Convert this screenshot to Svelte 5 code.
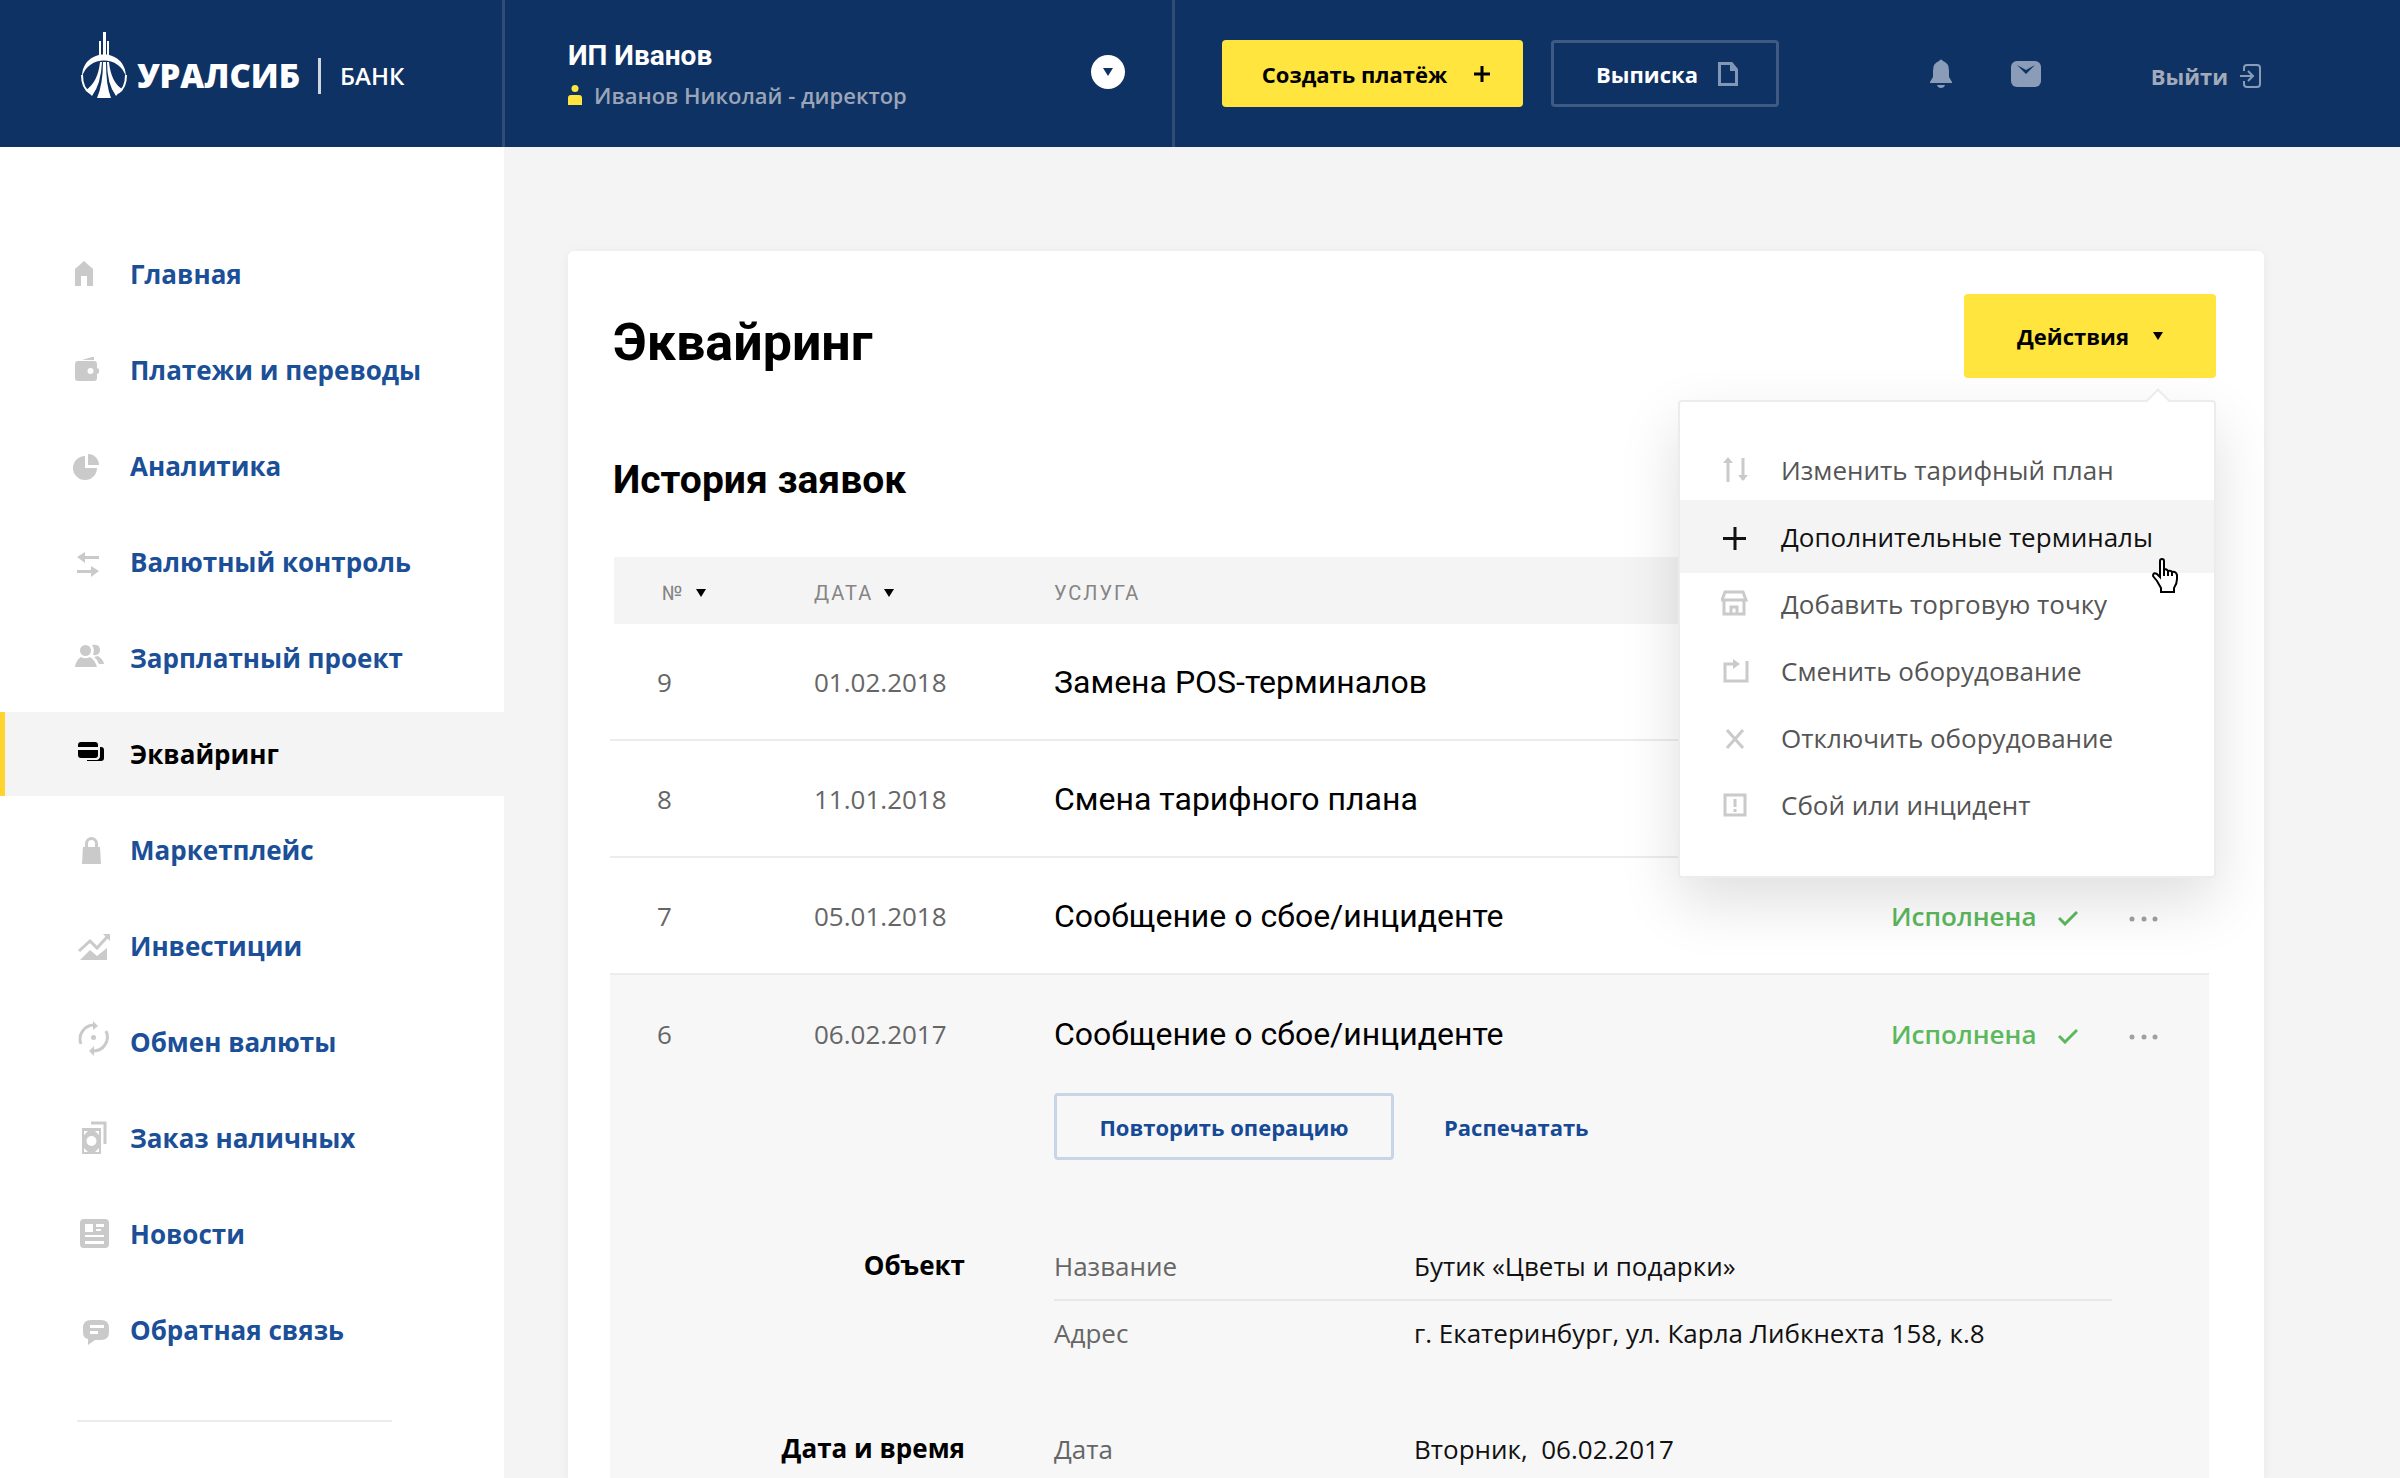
<script>
  const menu = [
    { title: 'Главная', icon: '<path d="M12 7l9 8v17h-6V22H9v10H3V15z"/>' },
    {
      title: 'Платежи и переводы',
      icon: '<path fill-rule="evenodd" d="M6 11h16q3 0 3 3v4l2 1v4l-2 1v4q0 3-3 3H6q-3 0-3-3V14q0-3 3-3zM18.500 18a3 3 0 1 0 0 6 3 3 0 0 0 0-6z"/><path d="M10 10l10-3h2v3z"/>'
    },
    {
      title: 'Аналитика',
      icon: '<path d="M13 10v12h12a12 12 0 1 1-12-12z"/><path d="M16 8a11 11 0 0 1 11 11H16z"/>'
    },
    {
      title: 'Валютный контроль',
      icon: '<path d="M5 15l8-5v4h14v3H13v4z"/><path d="M27 29l-8-5v4H5v3h14v4z"/>'
    },
    {
      title: 'Зарплатный проект',
      icon: '<circle cx="13.500" cy="12.500" r="5.500"/><path d="M3 29q1-7 6-10 4.500 2.500 9 0 5 3 7 10z"/><path d="M20 7q8-1 8 5t-7 5q2-5-1-10zM22 19l4-1q5 3 6 8h-5q-2-5-5-7z"/>'
    },
    {
      title: 'Эквайринг',
      active: true,
      icon: '<path d="M9 8h14q3 0 3 3v2H6v-2q0-3 3-3zM6 16h20v5q0 3-3 3H9q-3 0-3-3z"/><path d="M28 13h1q3 0 3 3v8q0 3-3 3H15v-1h10q3-1 3-4z"/>'
    },
    {
      title: 'Маркетплейс',
      icon: '<path d="M11 17h17l1 17H10z"/><path d="M14.500 18v-4.500a5 5 0 0 1 10 0V18" fill="none" stroke="currentColor" stroke-width="3"/>'
    },
    {
      title: 'Инвестиции',
      icon: '<path d="M7 25l11-10 7 7 10-11" fill="none" stroke="currentColor" stroke-width="3"/><path d="M31 8h7v7zM8 34l10-10 7 6 10-8v12z"/>'
    },
    {
      title: 'Обмен валюты',
      icon: '<path d="M9 22A14 14 0 0 1 22 3M34 9A14 14 0 0 1 21 29" fill="none" stroke="currentColor" stroke-width="3"/><path d="M21-1l5 5-5 4zM22 24l-5 5 5 5z"/><circle cx="21.500" cy="15.500" r="2.500"/>'
    },
    {
      title: 'Заказ наличных',
      icon: '<path d="M10 10h19v26H10z"/><path d="M19 5h14v21" fill="none" stroke="currentColor" stroke-width="3"/><circle cx="19.500" cy="23" r="5" fill="#fff"/><path fill="#fff" d="M12 13h4l-4 4zM27 13h-4l4 4zM12 34h4l-4-4zM27 34h-4l4-4z"/>'
    },
    {
      title: 'Новости',
      icon: '<rect x="8" y="5" width="29" height="29" rx="4"/><path fill="#fff" d="M13 10h8v8h-8zM24 10h8v3h-8zM24 15h5v2h-5zM13 21h19v2H13zM13 27h19v3H13z"/>'
    },
    {
      title: 'Обратная связь',
      icon: '<path d="M19 10h10q8 0 8 8v4q0 8-8 8h-6l-7 5v-6q-5-1-5-7v-4q0-8 8-8z"/><path fill="#fff" d="M18 15h14v3H18zM18 21h8v3h-8z"/>'
    }
  ];

  const actions = [
    { title: 'Изменить тарифный план', icon: '<path d="M7 27V5M22 3v22" stroke-width="3"/><path d="M2 8l5-6 5 6zM17 20l5 6 5-6z" fill="currentColor" stroke="none"/>' },
    { title: 'Дополнительные терминалы', hover: true, icon: '<path d="M14 5v23M2 16.500h23" stroke-width="3"/>' },
    { title: 'Добавить торговую точку', icon: '<path d="M4 3h18l3 8H1zM3 11v14h20V11M10 25v-7h6v7" stroke-width="3"/>' },
    { title: 'Сменить оборудование', icon: '<path d="M14 8H4v17h22V5" stroke-width="3"/><path d="M12 3l7 5-7 5z" fill="currentColor" stroke="none"/>' },
    { title: 'Отключить оборудование', icon: '<path d="M6 7l16 18M22 7L6 25" stroke-width="3"/>' },
    { title: 'Сбой или инцидент', icon: '<path d="M4 5h20v20H4zM14 9v8M14 19v3" stroke-width="3"/>' }
  ];

  const requests = [
    { id: 9, date: '01.02.2018', service: 'Замена POS-терминалов' },
    { id: 8, date: '11.01.2018', service: 'Смена тарифного плана' },
    { id: 7, date: '05.01.2018', service: 'Сообщение о сбое/инциденте', status: 'Исполнена' },
    { id: 6, date: '06.02.2017', service: 'Сообщение о сбое/инциденте', status: 'Исполнена', open: true }
  ];

  const details = [
    {
      title: 'Объект',
      rows: [
        ['Название', 'Бутик «Цветы и подарки»'],
        ['Адрес', 'г. Екатеринбург, ул. Карла Либкнехта 158, к.8']
      ]
    },
    { title: 'Дата и время', rows: [['Дата', 'Вторник,\u00a0 06.02.2017']] }
  ];
</script>

<div class="page">
  <header>
    <a class="logo" href="#main" aria-label="Уралсиб банк">
      <svg width="46" height="66" viewBox="0 0 46 66" fill="#fff">
        <path d="M22 0h3v23h-3zM18 9h2v14h-2zM26 9h2v14h-2z" />
        <path d="M1 45C1 15 45 15 45 45 39 23 7 23 1 45z" />
        <path d="M1 43q0 13 8 18M45 43q0 13-8 18" fill="none" stroke="#fff" stroke-width="2" />
        <path d="M22 30h3q0 24 5 36H16q6-14 6-36zM19 30h2q-1 22-10 34l-6-6q12-8 14-28zM26 30h2q2 20 13 27l-6 7Q26 52 26 30z" />
      </svg>
      <span class="brand">УРАЛСИБ</span>
      <span class="bank">БАНК</span>
    </a>

    <div class="profile">
      <div>
        <strong>ИП Иванов</strong>
        <p>
          <svg width="14" height="20" viewBox="0 0 14 20" fill="#ffe53d">
            <circle cx="7" cy="3.500" r="3.500" />
            <path d="M3 10h8q3 0 3 3v7H0v-7q0-3 3-3z" />
          </svg>
          Иванов Николай - директор
        </p>
      </div>
      <button class="switch" type="button" aria-label="Сменить организацию">
        <svg width="10" height="8" viewBox="0 0 10 8"><path d="M0 0h10L5 8z" /></svg>
      </button>
    </div>

    <button class="btn pay" type="button">
      Создать платёж
      <svg width="18" height="18" viewBox="0 0 18 18"><path d="M9 1v16M1 9h16" stroke="#000" stroke-width="3" /></svg>
    </button>
    <button class="btn extract" type="button">
      Выписка
      <svg width="20" height="24" viewBox="0 0 20 24">
        <path d="M1.500 1.500h12l5 6v15h-17z" fill="none" stroke="#8296b5" stroke-width="3" />
        <path d="M12 1v8h7z" fill="#8296b5" />
      </svg>
    </button>

    <div class="tools">
      <button type="button" aria-label="Уведомления">
        <svg width="22" height="30" viewBox="0 0 22 30" fill="#8b9cb8">
          <path d="M9 2q2-3 4 0 6 2 6 10v6l3 5v1H0v-1l3-5v-6Q3 4 9 2zM7 26h8q-1 3-4 3t-4-3z" />
        </svg>
      </button>
      <button type="button" aria-label="Сообщения">
        <svg width="30" height="26" viewBox="0 0 30 26">
          <rect x="0" y="0" width="30" height="26" rx="6" fill="#8b9cb8" />
          <path d="M6 4l9 5 9-5-9 9z" fill="#0f3264" />
        </svg>
      </button>
      <a class="exit" href="#exit">
        Выйти
        <svg width="22" height="26" viewBox="0 0 22 26" fill="none" stroke="#8b9cb8" stroke-width="2">
          <path d="M4 8V5q0-3 3-3h10q3 0 3 3v16q0 3-3 3H7q-3 0-3-3v-3M0 13h12M8 8l5 5-5 5" />
        </svg>
      </a>
    </div>
  </header>

  <div class="body">
    <nav>
      {#each menu as item}
        <a href="#main" class:active={item.active}>
          <svg width="40" height="40" viewBox="0 0 40 40" fill="currentColor">{@html item.icon}</svg>
          <span>{item.title}</span>
        </a>
      {/each}
      <hr />
    </nav>

    <main>
      <div class="card">
        <div class="card-head">
          <h1>Эквайринг</h1>
          <div class="dropdown">
            <button class="btn toggle" type="button" aria-expanded="true">
              Действия
              <svg width="10" height="8" viewBox="0 0 10 8"><path d="M0 0h10L5 8z" /></svg>
            </button>
            <ul>
              {#each actions as action}
                <li>
                  <button type="button" class:hover={action.hover}>
                    <svg width="28" height="30" viewBox="0 0 28 30" fill="none" stroke="currentColor">{@html action.icon}</svg>
                    {action.title}
                  </button>
                </li>
              {/each}
            </ul>
            <svg class="cursor" width="28" height="36" viewBox="0 0 28 36">
              <path
                d="M8 3q0-2 2-2t2 2v9q2-2 4 1 3-1 4 1 4-1 5 3v4q0 5-3 9v4H9v-4L5 23l-4-5q0-4 4-2l3 3z"
                fill="#fff"
                stroke="#000"
                stroke-width="2"
              />
              <path d="M12 12v6M16 13v5M20 14v4" stroke="#000" stroke-width="2" />
            </svg>
          </div>
        </div>

        <h2>История заявок</h2>

        <table>
          <thead>
            <tr>
              <th class="num">№ <svg width="10" height="8" viewBox="0 0 10 8"><path d="M0 0h10L5 8z" /></svg></th>
              <th class="date">Дата <svg width="10" height="8" viewBox="0 0 10 8"><path d="M0 0h10L5 8z" /></svg></th>
              <th>Услуга</th>
              <th class="status"></th>
              <th class="more"></th>
            </tr>
          </thead>
          <tbody>
            {#each requests as request}
              <tr class:open={request.open}>
                <td class="num">{request.id}</td>
                <td>{request.date}</td>
                <td class="service">{request.service}</td>
                <td class="status">
                  {#if request.status}
                    {request.status}
                    <svg width="20" height="16" viewBox="0 0 20 16"><path d="M1 8l6 6L19 2" fill="none" stroke="#5cb85c" stroke-width="3" /></svg>
                  {/if}
                </td>
                <td>
                  {#if request.status}
                    <button class="dots" type="button" aria-label="Ещё">
                      <svg width="30" height="6" viewBox="0 0 30 6" fill="#a0a0a0">
                        <circle cx="3" cy="3" r="2.500" /><circle cx="15" cy="3" r="2.500" /><circle cx="26" cy="3" r="2.500" />
                      </svg>
                    </button>
                  {/if}
                </td>
              </tr>
            {/each}
            <tr class="open">
              <td colspan="5">
                <div class="buttons">
                  <button class="btn repeat" type="button">Повторить операцию</button>
                  <button class="btn print" type="button">Распечатать</button>
                </div>
                {#each details as group}
                  <section>
                    <h3>{group.title}</h3>
                    <dl>
                      {#each group.rows as [name, value]}
                        <div>
                          <dt>{name}</dt>
                          <dd>{value}</dd>
                        </div>
                      {/each}
                    </dl>
                  </section>
                {/each}
              </td>
            </tr>
          </tbody>
        </table>
      </div>
    </main>
  </div>
</div>

<style>
  :global(body) {
    margin: 0;
    background: #f4f4f4;
  }

  .page {
    display: flex;
    flex-direction: column;
    min-height: 100vh;
    color: #000;
    font-family: 'Open Sans', 'Noto Sans', sans-serif;
    font-size: 26px;
    line-height: 36px;
  }

  .page :global(*) {
    box-sizing: border-box;
  }

  a {
    color: inherit;
    text-decoration: none;
  }

  button {
    padding: 0;
    border: 0;
    background: none;
    color: inherit;
    font: inherit;
    cursor: pointer;
  }

  svg {
    flex: none;
  }

  header {
    display: flex;
    align-items: center;
    height: 147px;
    background: #0f3264;
    color: #fff;
  }

  .logo {
    display: flex;
    flex: none;
    align-items: center;
    width: 505px;
    height: 100%;
    padding: 4px 0 0 81px;
    border-right: 3px solid #304d78;
  }

  .logo svg {
    margin-bottom: 21px;
  }

  .brand {
    margin-left: 10px;
    font-size: 33px;
    font-weight: 800;
  }

  .bank {
    margin-left: 18px;
    padding-left: 19px;
    border-left: 3px solid #cfd6e0;
    font-size: 24px;
    font-weight: 600;
  }

  .profile {
    display: flex;
    flex: none;
    align-items: center;
    justify-content: space-between;
    width: 670px;
    height: 100%;
    padding: 0 47px 0 63px;
    border-right: 3px solid #304d78;
  }

  .profile strong {
    display: block;
    padding-top: 3px;
    font-family: Roboto, sans-serif;
    font-size: 28px;
  }

  .profile p {
    display: flex;
    align-items: center;
    gap: 12px;
    margin: 3px 0 0;
    color: #9aa5b8;
    font-size: 22px;
    font-weight: 600;
  }

  .switch {
    display: grid;
    place-items: center;
    width: 34px;
    height: 34px;
    margin-bottom: 4px;
    border-radius: 50%;
    background: #fff;
  }

  .switch svg {
    fill: #0f3264;
  }

  .btn {
    display: flex;
    align-items: center;
    justify-content: center;
    height: 67px;
    border-radius: 4px;
    font-size: 22px;
    font-weight: 700;
    white-space: nowrap;
  }

  .pay {
    gap: 26px;
    width: 301px;
    margin-left: 47px;
    padding-left: 8px;
    background: #ffe53d;
    color: #000;
  }

  .extract {
    gap: 20px;
    width: 228px;
    margin-left: 28px;
    padding-left: 4px;
    border: 3px solid #3f5b83;
  }

  .tools {
    display: flex;
    align-items: center;
    gap: 59px;
    margin-left: auto;
    padding-right: 138px;
  }

  .tools button {
    display: flex;
  }

  .exit {
    display: flex;
    align-items: center;
    gap: 12px;
    margin-left: 51px;
    padding-top: 4px;
    color: #a3abba;
    font-size: 22px;
    font-weight: 700;
  }

  .body {
    display: flex;
    flex: 1;
  }

  nav {
    display: flex;
    flex: none;
    flex-direction: column;
    gap: 12px;
    width: 504px;
    padding-top: 85px;
    background: #fff;
  }

  nav a {
    display: flex;
    align-items: center;
    gap: 18px;
    height: 84px;
    padding-left: 67px;
    border-left: 5px solid transparent;
    color: #1b4f97;
    font-weight: 700;
  }

  nav svg {
    overflow: visible;
    color: #cacaca;
  }

  nav a.active {
    border-color: #ffd42f;
    background: #f4f4f4;
    color: #000;
  }

  nav .active svg {
    color: #000;
  }

  nav hr {
    width: 315px;
    margin: 36px 0 0 77px;
    border: 0;
    border-top: 2px solid #ececec;
  }

  main {
    display: flex;
    flex: 1;
    padding: 104px 136px 0 64px;
  }

  .card {
    flex: 1;
    padding: 43px 55px 0 42px;
    border-radius: 6px 6px 0 0;
    background: #fff;
    box-shadow: 0 2px 12px rgba(0, 0, 0, 0.05);
  }

  .card-head {
    display: flex;
    align-items: center;
    justify-content: space-between;
    height: 84px;
    margin-right: -7px;
  }

  h1,
  h2 {
    margin: 0;
    padding-left: 3px;
    font-family: Roboto, sans-serif;
    font-weight: 700;
  }

  h1 {
    padding-top: 14px;
    font-size: 52px;
    line-height: 60px;
  }

  h2 {
    margin: 78px 0 53px;
    font-size: 39px;
    line-height: 48px;
  }

  .dropdown {
    position: relative;
  }

  .toggle {
    gap: 24px;
    width: 252px;
    height: 84px;
    background: #ffe53d;
  }

  .dropdown ul {
    position: absolute;
    top: 106px;
    right: 0;
    z-index: 1;
    width: 538px;
    margin: 0;
    padding: 34px 0 38px;
    border: 2px solid #ececec;
    border-radius: 4px;
    background: #fff;
    box-shadow: 0 24px 60px rgba(0, 0, 0, 0.13);
    list-style: none;
  }

  .dropdown ul::before {
    content: '';
    position: absolute;
    top: -10px;
    right: 47px;
    width: 16px;
    height: 16px;
    border: solid #ececec;
    border-width: 2px 0 0 2px;
    background: #fff;
    transform: rotate(45deg);
  }

  .dropdown li button {
    display: flex;
    align-items: center;
    gap: 32px;
    width: 100%;
    height: 67px;
    padding-left: 41px;
    color: #555;
    white-space: nowrap;
  }

  .dropdown li svg {
    color: #cacaca;
  }

  .dropdown li button.hover {
    height: 73px;
    margin: -3px 0;
    background: #f4f4f4;
    color: #111;
  }

  .dropdown .hover svg {
    color: #111;
  }

  .cursor {
    position: absolute;
    top: 264px;
    right: 36px;
    z-index: 2;
  }

  table {
    width: 100%;
    border-spacing: 0;
    table-layout: fixed;
  }

  th {
    height: 67px;
    padding: 4px 0 0;
    background: #f4f4f4;
    color: #858585;
    font-family: Roboto, sans-serif;
    font-size: 20px;
    font-weight: 400;
    letter-spacing: 2px;
    text-align: left;
    text-transform: uppercase;
  }

  th svg {
    margin: 0 0 3px 4px;
  }

  th.num {
    width: 204px;
    padding-left: 48px;
    border-left: 4px solid #fff;
  }

  th.date {
    width: 240px;
  }

  th.status {
    width: 238px;
  }

  th.more {
    width: 80px;
  }

  td {
    height: 117px;
    padding: 0;
    border-bottom: 2px solid #ececec;
    color: #666;
  }

  td.num {
    padding-left: 47px;
  }

  .service {
    color: #000;
    font-family: Roboto, sans-serif;
    font-size: 32px;
  }

  td.status {
    color: #5cb85c;
    font-weight: 600;
  }

  .status svg {
    margin-left: 22px;
  }

  .dots {
    display: flex;
    padding: 12px 0 6px;
  }

  .open td {
    border-bottom: 0;
    background: #f7f7f7;
  }

  .buttons {
    display: flex;
    gap: 50px;
    padding: 1px 0 72px 444px;
    color: #164a96;
  }

  .repeat {
    width: 340px;
    border: 3px solid #c8d5e6;
  }

  section {
    display: grid;
    grid-template-columns: 355px 1fr;
    column-gap: 89px;
    padding-right: 97px;
  }

  section + section {
    margin-top: 49px;
  }

  h3 {
    margin: 0;
    padding-top: 15px;
    color: #000;
    font-size: 26px;
    font-weight: 700;
    text-align: right;
  }

  dl {
    margin: 0;
  }

  dl div {
    display: grid;
    grid-template-columns: 360px 1fr;
    padding: 16px 0 15px;
  }

  dl div + div {
    padding-top: 14px;
    border-top: 2px solid #e8e8e8;
  }

  section:last-child dl div {
    padding-bottom: 12px;
  }

  dd {
    margin: 0;
    color: #111;
  }
</style>
